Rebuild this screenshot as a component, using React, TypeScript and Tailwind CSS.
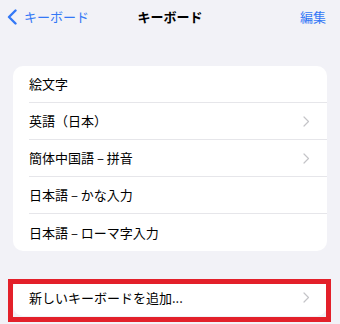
import React from 'react';

const rows = [
  { label: '絵文字', chevron: false },
  { label: '英語（日本）', chevron: true },
  { label: '簡体中国語 – 拼音', chevron: true },
  { label: '日本語 – かな入力', chevron: false },
  { label: '日本語 – ローマ字入力', chevron: false },
];

const Chevron = () => (
  <svg width="7" height="11" viewBox="0 0 7 11" fill="none">
    <path d="M1 1l4.5 4.5L1 10" stroke="#c4c4c8" strokeWidth="1.2" strokeLinecap="round" strokeLinejoin="round" />
  </svg>
);

export default function App() {
  return (
    <div
      className="w-[340px] h-[324px] overflow-hidden bg-[#f2f2f7] text-[13px] text-black"
      style={{ fontFamily: '"Noto Sans CJK JP", "Noto Sans", sans-serif' }}
    >
      {/* nav bar */}
      <div className="h-[34px] grid grid-cols-[1fr_auto_1fr] items-center">
        <div className="flex items-center pl-[7px] text-[#3478f6]">
          <svg width="10" height="16" viewBox="0 0 10 16" fill="none">
            <path d="M8.5 1.5L2 8l6.5 6.5" stroke="#3478f6" strokeWidth="2.4" strokeLinecap="round" strokeLinejoin="round" />
          </svg>
          <span className="ml-[7px]">キーボード</span>
        </div>
        <div className="font-bold">キーボード</div>
        <div className="text-right pr-[14px] text-[#3478f6]">編集</div>
      </div>

      {/* keyboards list */}
      <div className="mx-[13px] mt-[32px] bg-white rounded-[10px] overflow-hidden">
        {rows.map((r, i) => (
          <div key={r.label} className="pl-4 h-[37px] flex">
            <div
              className={`flex-1 flex items-center justify-between pr-[17px] ${
                i < rows.length - 1 ? 'border-b border-[#e6e6ea]' : ''
              }`}
            >
              <span>{r.label}</span>
              {r.chevron && <Chevron />}
            </div>
          </div>
        ))}
      </div>

      {/* add keyboard */}
      <div className="relative mx-[13px] mt-[28px]">
        <div className="bg-white rounded-[10px] h-[37px] pl-4 pr-[17px] flex items-center justify-between">
          <span>新しいキーボードを追加...</span>
          <Chevron />
        </div>
        <div className="absolute left-[-5px] right-[-4px] top-0 h-[43px] border-[5px] border-[#e3202a]" />
      </div>
    </div>
  );
}
